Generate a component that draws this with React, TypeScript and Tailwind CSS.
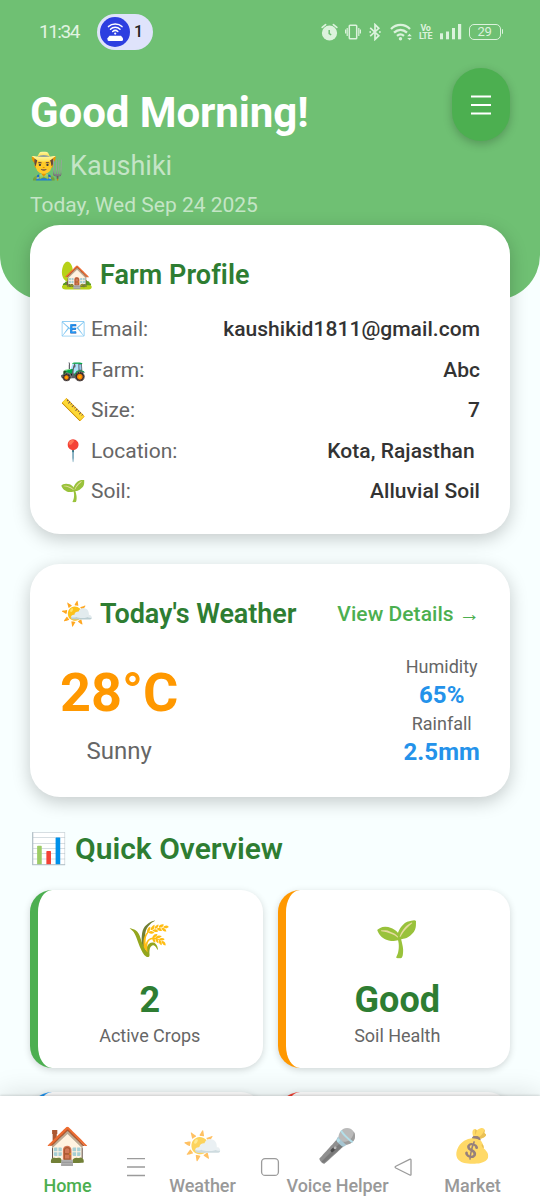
import React from "react";

function AlarmIcon() {
  return (
    <svg width="18" height="18" viewBox="0 0 18 18" fill="none">
      <circle cx="8.5" cy="10" r="7.6" fill="#dcf2dd" />
      <path d="M1.200 4.400 4.600 1.600M15.800 4.400 12.400 1.600" stroke="#dcf2dd" strokeWidth="1.700" strokeLinecap="round" />
      <path d="M8.200 7v3.600l2 1.200" stroke="#6fc073" strokeWidth="1.500" />
    </svg>
  );
}

function VibrateIcon() {
  return (
    <svg width="16" height="16" viewBox="0 0 16 16" fill="none" stroke="#dcf2dd" strokeWidth="1.500">
      <rect x="4.300" y="1.200" width="7.400" height="13.600" rx="0.800" />
      <path d="M2.200 4v8M13.800 4v8M0.600 5.500v4M15.400 5.500v4" strokeWidth="1.200" />
    </svg>
  );
}

function BluetoothIcon() {
  return (
    <svg width="12" height="18" viewBox="0 0 12 18" fill="none" stroke="#dcf2dd" strokeWidth="1.700">
      <path d="M1.200 4.800 9.800 12.700 6 16.400V1.600l3.800 3.700L1.200 13.200" />
      <circle cx="1.200" cy="9" r="0.900" fill="#dcf2dd" stroke="none" />
      <circle cx="10.900" cy="9" r="0.900" fill="#dcf2dd" stroke="none" />
    </svg>
  );
}

function WifiIcon() {
  return (
    <svg width="22" height="18" viewBox="0 0 22 18" fill="none" stroke="#dcf2dd" strokeWidth="2.300">
      <path d="M1 6C6.500.600 14.500.600 20 6" />
      <path d="M4 9.700C8 6 13 6 17 9.700" />
      <path d="M7 12.800C9.200 11 11.800 11 14 12.800" />
      <circle cx="10.500" cy="15.700" r="1.700" fill="#dcf2dd" stroke="none" />
      <path d="M17.200 13.300 19.500 10.800 21.800 13.300zM17.200 15 19.500 17.300 21.800 15z" fill="#dcf2dd" stroke="none" />
    </svg>
  );
}

function SignalIcon() {
  return (
    <svg width="22" height="16" viewBox="0 0 22 16" fill="#dcf2dd">
      <rect x="0" y="9.300" width="3" height="6" />
      <rect x="6" y="7.500" width="3" height="7.800" />
      <rect x="12" y="4" width="3" height="11.300" />
      <rect x="18" y="0" width="3.200" height="15.300" />
    </svg>
  );
}

function StatusBar() {
  return (
    <div className="flex h-[63px] items-center pl-[39px] pr-[37px]">
      <div className="w-[58px] pt-px text-[19px] tracking-[-1.5px] text-[#e2f4e2]">11:34</div>
      <div className="flex h-9 w-[56px] items-center rounded-full bg-[#dfe3fb] pl-[3px]">
        <svg width="30" height="30" viewBox="0 0 30 30" fill="none">
          <circle cx="15" cy="15" r="15" fill="#2d3fe0" />
          <path d="M8.500 9.600C12 6 18.500 6 22 9.600M10.500 12.200C13 9.700 17.500 9.700 20 12.200M12.700 14.500C14.200 13.200 16.300 13.200 17.800 14.500" stroke="#fff" strokeWidth="1.500" strokeLinecap="round" />
          <circle cx="15.200" cy="16.600" r="1.100" fill="#fff" />
          <path d="M9.500 18.800h11.500l2 2.400v1.300q0 1.500-1.500 1.500H9q-1.500 0-1.500-1.500v-1.300z" fill="#fff" />
        </svg>
        <span className="ml-[4px] text-[16px] font-medium text-[#222]">1</span>
      </div>
      <div className="ml-auto flex items-center">
        <AlarmIcon />
        <div className="ml-[6px]"><VibrateIcon /></div>
        <div className="ml-[8px]"><BluetoothIcon /></div>
        <div className="ml-[9px]"><WifiIcon /></div>
        <div className="ml-[8px] flex w-3 flex-col items-center font-['Liberation_Sans_Narrow',Roboto,sans-serif] text-[9px] leading-[8px] font-bold tracking-[-0.5px] text-[#dcf2dd]">
          <span>Vo</span>
          <span>LTE</span>
        </div>
        <div className="ml-[8px]"><SignalIcon /></div>
        <div className="ml-[7px] flex h-4 w-[32px] items-center justify-center rounded-[5px] border-[1.5px] border-[#dcf2dd] text-[13px] tracking-[-0.4px] text-[#dcf2dd]">29</div>
        <div className="ml-px h-[5px] w-[1.5px] rounded-r bg-[#dcf2dd]" />
      </div>
    </div>
  );
}

const profile = [
  ["📧", "Email:", "kaushikid1811@gmail.com"],
  ["🚜", "Farm:", "Abc"],
  ["📏", "Size:", "7"],
  ["📍", "Location:", "Kota, Rajasthan "],
  ["🌱", "Soil:", "Alluvial Soil"],
];

const tabs = [
  ["🏠", "Home"],
  ["🌤️", "Weather"],
  ["🎤", "Voice Helper"],
  ["💰", "Market"],
];

function Stat({ icon, value, label, border }: { icon: string; value: string; label: string; border: string }) {
  return (
    <div className={"flex h-[178px] flex-col items-center rounded-[22px] border-l-[8px] bg-white pt-[22px] pr-px shadow-[0_2px_7px_rgba(0,0,0,0.16)] " + border}>
      <div className="h-[55px] text-[35.5px] leading-[55px]">{icon}</div>
      <div className="mt-[12px] text-[36px] leading-[42px] font-bold text-[#2e7d32]">{value}</div>
      <div className="mt-[2px] text-[18px] leading-[25px] tracking-[-0.03px] text-[#666]">{label}</div>
    </div>
  );
}

export default function App() {
  return (
    <div className="flex h-[1200px] w-[540px] flex-col overflow-hidden bg-[#f8ffff] font-[Roboto,'Noto_Color_Emoji',sans-serif]">
      <main className="min-h-0 flex-1 overflow-hidden">
        <header className="h-[300px] rounded-b-[45px] bg-[#6fc073]">
          <StatusBar />
          <div className="flex justify-between pl-[30px] pr-[30px]">
            <div>
              <h1 className="mt-[22px] text-[42px] leading-[56px] font-bold tracking-[-0.08px] text-white">Good Morning!</h1>
              <div className="mt-[7px] flex h-[36px] items-center text-[27px] text-white/60">
                <span className="w-[40px] text-white">👨‍🌾</span>
                <span>Kaushiki</span>
              </div>
              <div className="mt-[7px] text-[21px] leading-[28px] text-white/60">Today, Wed Sep 24 2025</div>
            </div>
            <button className="mt-[5px] flex h-[73px] w-[58px] items-center justify-center rounded-[29px] bg-[#4caf50] shadow-[0_3px_10px_rgba(0,0,0,0.22)]">
              <svg width="22" height="22" viewBox="0 0 22 22" stroke="#fff" strokeWidth="2.200">
                <path d="M1 2.500h20M1 11h20M1 19.500h20" />
              </svg>
            </button>
          </div>
        </header>

        <section className="relative mx-[30px] -mt-[75px] h-[309px] rounded-[30px] bg-white px-[30px] pt-[30px] shadow-[0_5px_18px_rgba(0,0,0,0.21)]">
          <h2 className="flex h-[40px] items-center text-[27px] font-semibold text-[#2e7d32]">
            <span className="w-[40px]">🏡</span>
            <span className="tracking-[0.06px]">Farm Profile</span>
          </h2>
          <div className="mt-[20.500px] flex flex-col gap-[12px]">
            {profile.map(([icon, label, value]) => (
              <div key={label} className="flex h-[28.5px] items-center justify-between text-[21px]">
                <span className="flex items-center text-[#666]">
                  <span className="w-[31px]">{icon}</span>{label}
                </span>
                <span className="whitespace-pre font-[550] tracking-[0.05px] text-[#333]">{value}</span>
              </div>
            ))}
          </div>
        </section>

        <section className="mx-[30px] mt-[30px] h-[233px] rounded-[30px] bg-white px-[30px] pt-[31px] shadow-[0_5px_18px_rgba(0,0,0,0.21)]">
          <div className="flex h-[39px] items-center justify-between">
            <h2 className="flex items-center text-[27px] font-semibold text-[#2e7d32]">
              <span className="w-[40px]">🌤️</span>
              <span className="tracking-[-0.08px]">Today's Weather</span>
            </h2>
            <span className="text-[21px] font-[550] tracking-[0.05px] text-[#4caf50]">View Details →</span>
          </div>
          <div className="mt-[20px] flex justify-between">
            <div className="flex flex-col items-center">
              <div className="mt-[3px] text-[54px] leading-[72px] font-bold text-[#ff9800]">28°C</div>
              <div className="mt-[6px] text-[24px] leading-[32px] text-[#666]">Sunny</div>
            </div>
            <div className="flex flex-col items-center">
              <div className="text-[18px] leading-[25px] text-[#666]">Humidity</div>
              <div className="text-[24px] leading-[33px] font-bold tracking-[0.1px] text-[#2492ea]">65%</div>
              <div className="text-[18px] leading-[24px] text-[#666]">Rainfall</div>
              <div className="text-[24px] leading-[33px] font-bold tracking-[0.1px] text-[#2492ea]">2.5mm</div>
            </div>
          </div>
        </section>

        <h2 className="mx-[30px] mt-[31px] flex h-[40px] items-center text-[30px] font-semibold text-[#2e7d32]">
          <span className="w-[45px]">📊</span>Quick Overview
        </h2>
        <div className="mx-[30px] mt-[22px] grid grid-cols-2 gap-x-[15px] gap-y-[24px]">
          <Stat icon="🌾" value="2" label="Active Crops" border="border-[#4caf50]" />
          <Stat icon="🌱" value="Good" label="Soil Health" border="border-[#ff9800]" />
          <div className="h-[178px] rounded-[22px] border-l-[8px] border-[#2196f3] bg-white shadow-[0_2px_7px_rgba(0,0,0,0.16)]" />
          <div className="h-[178px] rounded-[22px] border-l-[8px] border-[#f44336] bg-white shadow-[0_2px_7px_rgba(0,0,0,0.16)]" />
        </div>
      </main>

      <nav className="relative grid h-[104px] shrink-0 grid-cols-4 bg-white shadow-[0_-2px_26px_rgba(0,0,0,0.13),0_-1px_2px_rgba(0,0,0,0.12)]">
        {tabs.map(([icon, label], i) => (
          <div key={label} className="flex flex-col items-center pt-[26px]">
            <div className={"h-[48px] leading-[48px] " + (i === 0 ? "text-[36px]" : "text-[32.5px] opacity-70")}>{icon}</div>
            <div className={"mt-[4px] whitespace-nowrap text-[18px] leading-[24px] font-medium tracking-[-0.05px] " + (i === 0 ? "text-[#4caf50]" : "text-[#999]")}>{label}</div>
          </div>
        ))}
        <svg className="absolute top-[60px] left-[126px]" width="290" height="22" viewBox="0 0 290 22" fill="none" stroke="#9b9b9b" strokeWidth="1.300">
          <path d="M1 2.600h18M1 11h18M1 19.500h18" />
          <rect x="135.600" y="2.600" width="16.800" height="16.800" rx="3.500" />
          <path d="M285 4.200v14.200q0 1.200-1.200.6L269.800 12q-1.500-.900 0-1.800L283.600 3.300q1.400-.600 1.400.900z" />
        </svg>
      </nav>
    </div>
  );
}
